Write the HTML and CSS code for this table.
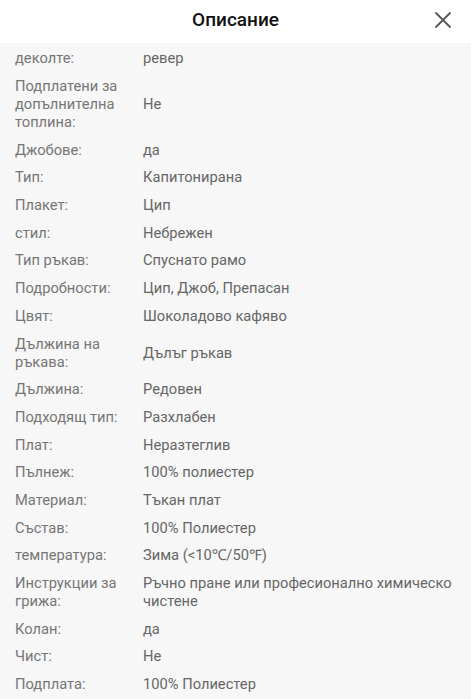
FILE: index.html
```html
<!DOCTYPE html>
<html lang="bg">
<head>
<meta charset="utf-8">
<link rel="stylesheet" href="styles.css">
</head>
<body>
<div class="sheet">
  <header class="head">
    <h1 class="title">Описание</h1>
    <button class="close" aria-label="Затвори">
      <svg width="18" height="18" viewBox="0 0 18 18"><path d="M2 2 L16 16 M16 2 L2 16" stroke="#555" stroke-width="1.8" stroke-linecap="round" fill="none"/></svg>
    </button>
  </header>
  <dl class="list">
    <div class="row"><dt>деколте:</dt><dd>ревер</dd></div>
    <div class="row"><dt>Подплатени за допълнителна топлина:</dt><dd>Не</dd></div>
    <div class="row"><dt>Джобове:</dt><dd>да</dd></div>
    <div class="row"><dt>Тип:</dt><dd>Капитонирана</dd></div>
    <div class="row"><dt>Плакет:</dt><dd>Цип</dd></div>
    <div class="row"><dt>стил:</dt><dd>Небрежен</dd></div>
    <div class="row"><dt>Тип ръкав:</dt><dd>Спуснато рамо</dd></div>
    <div class="row"><dt>Подробности:</dt><dd>Цип, Джоб, Препасан</dd></div>
    <div class="row"><dt>Цвят:</dt><dd>Шоколадово кафяво</dd></div>
    <div class="row"><dt>Дължина на ръкава:</dt><dd>Дълъг ръкав</dd></div>
    <div class="row"><dt>Дължина:</dt><dd>Редовен</dd></div>
    <div class="row"><dt>Подходящ тип:</dt><dd>Разхлабен</dd></div>
    <div class="row"><dt>Плат:</dt><dd>Неразтеглив</dd></div>
    <div class="row"><dt>Пълнеж:</dt><dd>100% полиестер</dd></div>
    <div class="row"><dt>Материал:</dt><dd>Тъкан плат</dd></div>
    <div class="row"><dt>Състав:</dt><dd>100% Полиестер</dd></div>
    <div class="row"><dt>температура:</dt><dd>Зима (&lt;10℃/50℉)</dd></div>
    <div class="row"><dt>Инструкции за грижа:</dt><dd>Ръчно пране или професионално химическо чистене</dd></div>
    <div class="row"><dt>Колан:</dt><dd>да</dd></div>
    <div class="row"><dt>Чист:</dt><dd>Не</dd></div>
    <div class="row"><dt>Подплата:</dt><dd>100% Полиестер</dd></div>
  </dl>
</div>
</body>
</html>
```
FILE: styles.css
```css
* { box-sizing: border-box; }
html, body { margin: 0; padding: 0; }
body {
  font-family: Roboto, "Noto Sans", Arial, sans-serif;
  background: #f7f7f7;
  width: 471px;
  height: 699px;
  overflow: hidden;
}
.sheet { display: flex; flex-direction: column; }
.head {
  height: 43px;
  background: #fff;
  display: flex;
  align-items: center;
  justify-content: center;
  position: relative;
}
.title {
  margin: 0;
  font-size: 19px;
  font-weight: 500;
  color: #111;
  line-height: 1;
  margin-top: -4px;
}
.close {
  position: absolute;
  right: 19px;
  top: 11px;
  border: 0;
  background: none;
  padding: 0;
  width: 18px;
  height: 18px;
  display: flex;
}
.list {
  margin: 0;
  padding: 1.5px 0 0;
  background: #f7f7f7;
}
.row {
  display: grid;
  grid-template-columns: 128px 1fr;
  align-items: center;
  padding: 4.85px 12px 4.85px 15px;
  font-size: 14.7px;
  line-height: 18px;
}
.row dt {
  color: #767676;
  padding-right: 8px;
}
.row dd {
  margin: 0;
  color: #666;
}
```
